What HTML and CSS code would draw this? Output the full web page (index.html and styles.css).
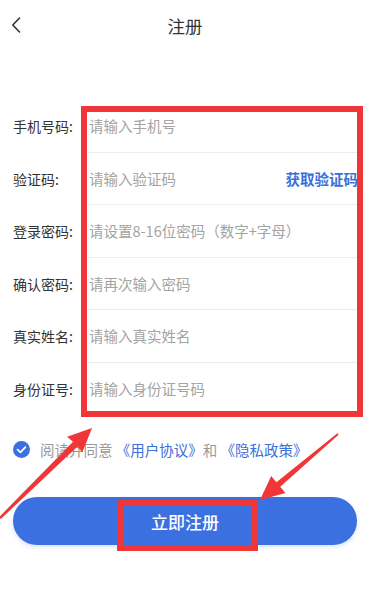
FILE: index.html
```html
<!DOCTYPE html>
<html lang="zh-CN">
<head>
<meta charset="utf-8">
<meta name="viewport" content="width=device-width, initial-scale=1">
<title>注册</title>
<link rel="stylesheet" href="styles.css">
</head>
<body>
<div class="page">
  <header class="header">
    <div class="back">
      <svg width="10" height="16" viewBox="0 0 10 16"><path d="M8.5 1 L1.8 8 L8.5 15" fill="none" stroke="#333" stroke-width="1.6" stroke-linecap="round" stroke-linejoin="round"/></svg>
    </div>
    <div class="title">注册</div>
    <div class="spacer"></div>
  </header>

  <div class="form">
    <div class="row"><div class="label">手机号码:</div><div class="field"><span class="ph">请输入手机号</span></div></div>
    <div class="row"><div class="label">验证码:</div><div class="field"><span class="ph">请输入验证码</span><span class="code">获取验证码</span></div></div>
    <div class="row"><div class="label">登录密码:</div><div class="field"><span class="ph">请设置8-16位密码（数字+字母）</span></div></div>
    <div class="row"><div class="label">确认密码:</div><div class="field"><span class="ph">请再次输入密码</span></div></div>
    <div class="row"><div class="label">真实姓名:</div><div class="field"><span class="ph">请输入真实姓名</span></div></div>
    <div class="row"><div class="label">身份证号:</div><div class="field"><span class="ph">请输入身份证号码</span></div></div>
  </div>

  <div class="agree">
    <span class="check">
      <svg width="17" height="17" viewBox="0 0 17 17"><circle cx="8.5" cy="8.5" r="8.5" fill="#3b70e0"/><path d="M4.6 8.7 L7.4 11.3 L12.4 6.2" fill="none" stroke="#fff" stroke-width="1.8" stroke-linecap="round" stroke-linejoin="round"/></svg>
    </span>
    <span class="agree-text">阅读并同意 <span class="link">《用户协议》</span>和 <span class="link">《隐私政策》</span></span>
  </div>

  <button class="submit">立即注册</button>

  <svg class="marks" width="369" height="608" viewBox="0 0 369 608">
    <rect x="84" y="109" width="276" height="305" fill="none" stroke="#f03636" stroke-width="6"/>
    <rect x="120" y="503" width="135" height="45" fill="none" stroke="#f03636" stroke-width="6"/>
    <polygon fill="#f03636" points="92,428 82.3,452.6 77.5,446.5 0.8,519 -0.8,517 73,441.8 67.1,436.8"/>
    <polygon fill="#f03636" points="260,500 285.4,492.9 280.2,486.8 338.6,434.8 337.4,433.2 276.4,482.2 271.2,476.1"/>
  </svg>
</div>
</body>
</html>
```

FILE: styles.css
```css
* { box-sizing: border-box; }
html, body { margin: 0; padding: 0; background: #fff; }
body {
  font-family: "Noto Sans CJK SC", "Noto Sans", sans-serif;
  color: #333;
}
.page {
  position: relative;
  width: 369px;
  height: 608px;
  overflow: hidden;
  background: #fff;
}
.header {
  height: 50px;
  display: grid;
  grid-template-columns: 60px 1fr 60px;
  align-items: center;
}
.back {
  padding-left: 11px;
  display: flex;
  align-items: center;
  padding-bottom: 1px;
}
.title {
  text-align: center;
  font-size: 17.5px;
  color: #333;
  padding-left: 1px;
}
.form {
  margin-top: 50px;
}
.row {
  height: 52.5px;
  display: flex;
  align-items: stretch;
}
.label {
  width: 88px;
  padding-left: 13px;
  font-size: 14px;
  color: #333;
  display: flex;
  align-items: center;
  white-space: nowrap;
}
.field {
  flex: 1;
  margin-right: 12px;
  border-bottom: 1px solid #ececec;
  display: flex;
  align-items: center;
  justify-content: space-between;
  padding-left: 1px;
}
.ph {
  font-size: 14.5px;
  color: #a3a3a3;
  white-space: nowrap;
}
.code {
  font-size: 14.5px;
  font-weight: bold;
  color: #3a6fd8;
  white-space: nowrap;
  margin-right: -1px;
}
.agree {
  margin-top: 24px;
  height: 20px;
  display: flex;
  align-items: center;
  padding-left: 13px;
}
.check {
  width: 17px;
  height: 17px;
  display: flex;
}
.agree-text {
  margin-left: 10px;
  font-size: 14.5px;
  color: #999;
  white-space: nowrap;
}
.link { color: #3a6fd8; }
.submit {
  display: block;
  margin: 38px 12px 0 13px;
  width: 344px;
  height: 48px;
  border: none;
  border-radius: 24px;
  background: #3b70e1;
  color: #fff;
  font-family: "Noto Sans CJK SC", "Noto Sans", sans-serif;
  font-size: 17px;
  font-weight: 500;
  box-shadow: 0 2px 4px rgba(59, 112, 225, 0.2);
  padding: 0;
}
.marks {
  position: absolute;
  left: 0;
  top: 0;
  pointer-events: none;
}
```
